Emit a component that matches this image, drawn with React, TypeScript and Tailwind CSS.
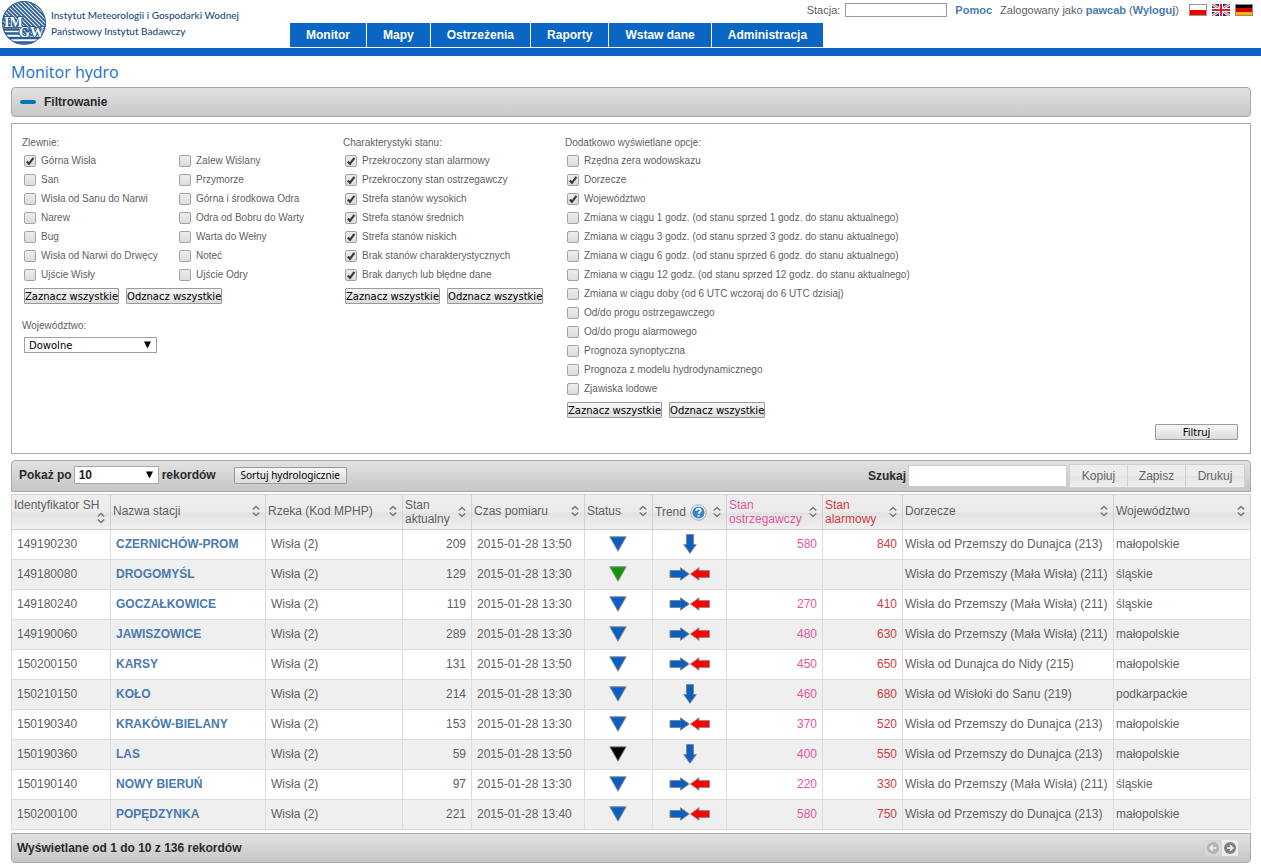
import React from "react";

const menu = ["Monitor", "Mapy", "Ostrzeżenia", "Raporty", "Wstaw dane", "Administracja"];

type Option = { label: string; checked?: boolean };

const basinsLeft: Option[] = [
  { label: "Górna Wisła", checked: true },
  { label: "San" },
  { label: "Wisła od Sanu do Narwi" },
  { label: "Narew" },
  { label: "Bug" },
  { label: "Wisła od Narwi do Drwęcy" },
  { label: "Ujście Wisły" },
];

const basinsRight: Option[] = [
  { label: "Zalew Wiślany" },
  { label: "Przymorze" },
  { label: "Górna i środkowa Odra" },
  { label: "Odra od Bobru do Warty" },
  { label: "Warta do Wełny" },
  { label: "Noteć" },
  { label: "Ujście Odry" },
];

const levels: Option[] = [
  { label: "Przekroczony stan alarmowy", checked: true },
  { label: "Przekroczony stan ostrzegawczy", checked: true },
  { label: "Strefa stanów wysokich", checked: true },
  { label: "Strefa stanów średnich", checked: true },
  { label: "Strefa stanów niskich", checked: true },
  { label: "Brak stanów charakterystycznych", checked: true },
  { label: "Brak danych lub błędne dane", checked: true },
];

const extras: Option[] = [
  { label: "Rzędna zera wodowskazu" },
  { label: "Dorzecze", checked: true },
  { label: "Województwo", checked: true },
  { label: "Zmiana w ciągu 1 godz. (od stanu sprzed 1 godz. do stanu aktualnego)" },
  { label: "Zmiana w ciągu 3 godz. (od stanu sprzed 3 godz. do stanu aktualnego)" },
  { label: "Zmiana w ciągu 6 godz. (od stanu sprzed 6 godz. do stanu aktualnego)" },
  { label: "Zmiana w ciągu 12 godz. (od stanu sprzed 12 godz. do stanu aktualnego)" },
  { label: "Zmiana w ciągu doby (od 6 UTC wczoraj do 6 UTC dzisiaj)" },
  { label: "Od/do progu ostrzegawczego" },
  { label: "Od/do progu alarmowego" },
  { label: "Prognoza synoptyczna" },
  { label: "Prognoza z modelu hydrodynamicznego" },
  { label: "Zjawiska lodowe" },
];

type Station = {
  id: string;
  name: string;
  level: string;
  time: string;
  status: string;
  trend: "down" | "steady";
  warning: string;
  alarm: string;
  basin: string;
  region: string;
};

const BLUE = "#0a5fc0";
const GREEN = "#0f950f";
const BLACK = "#000000";

const stations: Station[] = [
  { id: "149190230", name: "CZERNICHÓW-PROM", level: "209", time: "2015-01-28 13:50", status: BLUE, trend: "down", warning: "580", alarm: "840", basin: "Wisła od Przemszy do Dunajca (213)", region: "małopolskie" },
  { id: "149180080", name: "DROGOMYŚL", level: "129", time: "2015-01-28 13:30", status: GREEN, trend: "steady", warning: "", alarm: "", basin: "Wisła do Przemszy (Mała Wisła) (211)", region: "śląskie" },
  { id: "149180240", name: "GOCZAŁKOWICE", level: "119", time: "2015-01-28 13:30", status: BLUE, trend: "steady", warning: "270", alarm: "410", basin: "Wisła do Przemszy (Mała Wisła) (211)", region: "śląskie" },
  { id: "149190060", name: "JAWISZOWICE", level: "289", time: "2015-01-28 13:30", status: BLUE, trend: "steady", warning: "480", alarm: "630", basin: "Wisła do Przemszy (Mała Wisła) (211)", region: "małopolskie" },
  { id: "150200150", name: "KARSY", level: "131", time: "2015-01-28 13:50", status: BLUE, trend: "steady", warning: "450", alarm: "650", basin: "Wisła od Dunajca do Nidy (215)", region: "małopolskie" },
  { id: "150210150", name: "KOŁO", level: "214", time: "2015-01-28 13:30", status: BLUE, trend: "down", warning: "460", alarm: "680", basin: "Wisła od Wisłoki do Sanu (219)", region: "podkarpackie" },
  { id: "150190340", name: "KRAKÓW-BIELANY", level: "153", time: "2015-01-28 13:30", status: BLUE, trend: "steady", warning: "370", alarm: "520", basin: "Wisła od Przemszy do Dunajca (213)", region: "małopolskie" },
  { id: "150190360", name: "LAS", level: "59", time: "2015-01-28 13:50", status: BLACK, trend: "down", warning: "400", alarm: "550", basin: "Wisła od Przemszy do Dunajca (213)", region: "małopolskie" },
  { id: "150190140", name: "NOWY BIERUŃ", level: "97", time: "2015-01-28 13:30", status: BLUE, trend: "steady", warning: "220", alarm: "330", basin: "Wisła do Przemszy (Mała Wisła) (211)", region: "śląskie" },
  { id: "150200100", name: "POPĘDZYNKA", level: "221", time: "2015-01-28 13:40", status: BLUE, trend: "steady", warning: "580", alarm: "750", basin: "Wisła od Przemszy do Dunajca (213)", region: "małopolskie" },
];

const Logo = () => (
  <svg width="46" height="46" viewBox="0 0 46 46" aria-hidden="true">
    <defs>
      <clipPath id="disc">
        <circle cx="24" cy="23" r="22" />
      </clipPath>
    </defs>
    <g clipPath="url(#disc)">
      <rect width="48" height="46" fill="#f2f6fa" />
      <g stroke="#2b5c95" strokeWidth="1.8">
        {[-36, -32, -28, -24, -20, -16, -12, -8, -4, 0, 4, 8, 12, 16, 20, 24, 28, 32].map((x) => (
          <path key={x} d={`M${x} -4 L${x + 42} 38`} />
        ))}
      </g>
      <path d="M0 27H20V36H48V46H0Z" fill="#fff" />
      <path d="M0 29.5H19M0 33.5H20M0 38H48M0 42.5H48" stroke="#2b5c95" strokeWidth="2.4" />
    </g>
    <circle cx="24" cy="23" r="21.4" fill="none" stroke="#2b5c95" strokeWidth="1" />
    <g
      fontFamily="'Liberation Serif', serif"
      fontWeight="bold"
      fill="#fff"
      stroke="#2b5c95"
      strokeWidth="2"
      paintOrder="stroke"
    >
      <text x="4" y="27" fontSize="14">IM</text>
      <text x="19" y="37" fontSize="14">GW</text>
    </g>
  </svg>
);

const FlagPl = () => (
  <svg width="18" height="12" viewBox="0 0 18 12" aria-hidden="true">
    <rect width="18" height="12" fill="#999" />
    <rect x="1" y="1" width="16" height="5" fill="#fff" />
    <rect x="1" y="6" width="16" height="5" fill="#f00000" />
  </svg>
);

const FlagUk = () => (
  <svg width="18" height="12" viewBox="0 0 18 12" aria-hidden="true">
    <rect width="18" height="12" fill="#1f3070" />
    <path d="M0 0L18 12M18 0L0 12" stroke="#fff" strokeWidth="2.8" />
    <path d="M0 0L18 12M18 0L0 12" stroke="#d03a3a" strokeWidth="1" />
    <path d="M9 0V12M0 6H18" stroke="#fff" strokeWidth="4" />
    <path d="M9 0V12M0 6H18" stroke="#d8232f" strokeWidth="2" />
  </svg>
);

const FlagDe = () => (
  <svg width="18" height="12" viewBox="0 0 18 12" aria-hidden="true">
    <rect width="18" height="12" fill="#8a8a8a" />
    <rect x="1" y="1" width="16" height="3" fill="#000" />
    <rect x="1" y="4" width="16" height="4" fill="#dd0000" />
    <rect x="1" y="8" width="16" height="3" fill="#ffb400" />
  </svg>
);

const SortIcon = () => (
  <svg width="8" height="12" viewBox="0 0 8 12" className="ml-auto shrink-0" aria-hidden="true">
    <path
      d="M0.8 4.6L4 1.4L7.2 4.6M0.8 7.4L4 10.6L7.2 7.4"
      fill="none"
      stroke="#777"
      strokeWidth="1.4"
    />
  </svg>
);

const HelpIcon = () => (
  <svg width="17" height="17" viewBox="0 0 17 17" className="shrink-0" aria-hidden="true">
    <circle cx="8.5" cy="8.5" r="7.7" fill="#f4f6f9" stroke="#a3a9b0" />
    <circle cx="8.5" cy="8.5" r="6.1" fill="#3585d0" />
    <path
      d="M6.2 6.8C6.3 5.2 7.3 4.6 8.5 4.6C9.9 4.6 10.8 5.4 10.8 6.5C10.8 8 8.6 8.1 8.6 9.9"
      fill="none"
      stroke="#fff"
      strokeWidth="1.7"
    />
    <rect x="7.7" y="11" width="1.8" height="1.7" fill="#fff" />
  </svg>
);

const StatusIcon = ({ color }: { color: string }) => (
  <svg width="18" height="16" viewBox="0 0 18 16" className="mx-auto" aria-hidden="true">
    <path d="M0.8 0.8H17.2L9 15.2Z" fill={color} stroke="#8c8c8c" strokeWidth="1" />
  </svg>
);

const TrendIcon = ({ trend }: { trend: "down" | "steady" }) =>
  trend === "down" ? (
    <svg width="14" height="20" viewBox="0 0 14 20" className="mx-auto" aria-hidden="true">
      <path d="M3.5 0.5H10.5V10.5H13.3L7 19.3L0.7 10.5H3.5Z" fill={BLUE} stroke="#7f8790" />
    </svg>
  ) : (
    <svg width="41" height="14" viewBox="0 0 41 14" className="mx-auto" aria-hidden="true">
      <path d="M1 3.5H11.5V0.8L20.2 7L11.5 13.2V10.5H1Z" fill={BLUE} stroke="#7f8790" />
      <path d="M40.5 3.5H30V0.8L21.3 7L30 13.2V10.5H40.5Z" fill="#ff0000" stroke="#9a8a8a" />
    </svg>
  );

const PagerArrow = ({ back, color }: { back?: boolean; color: string }) => (
  <svg width="12" height="12" viewBox="0 0 12 12" aria-hidden="true">
    <circle cx="6" cy="6" r="6" fill={color} />
    <path
      d={back ? "M9 6H3.4M6 3.2L3.2 6L6 8.8" : "M3 6H8.6M6 3.2L8.8 6L6 8.8"}
      fill="none"
      stroke="#f2f2f2"
      strokeWidth="1.6"
    />
  </svg>
);

const Checkbox = ({ label, checked }: Option) => (
  <label className="flex h-[19px] items-center gap-[5px] whitespace-nowrap">
    <span className="grid">
      <input
        type="checkbox"
        defaultChecked={checked}
        className="peer col-start-1 row-start-1 size-3 appearance-none rounded-[2px] border border-[#a3a3a3] bg-linear-to-b from-[#ededed] to-[#dcdcdc]"
      />
      <svg
        viewBox="0 0 12 12"
        className="pointer-events-none invisible col-start-1 row-start-1 size-3 peer-checked:visible"
        aria-hidden="true"
      >
        <path d="M2.8 6.4L5 8.8L9.4 2.9" fill="none" stroke="#3a3a3a" strokeWidth="2.2" />
      </svg>
    </span>
    {label}
  </label>
);

const SmallButton = ({ children, className = "" }: { children: React.ReactNode; className?: string }) => (
  <button
    type="button"
    className={`h-4 rounded-[1px] border border-[#9a9a9a] bg-linear-to-b from-[#f6f6f6] to-[#dcdcdc] pt-[2px] font-['DejaVu_Sans',sans-serif] text-[10px] leading-3 whitespace-nowrap text-black ${className}`}
  >
    {children}
  </button>
);

const SelectAll = () => (
  <div className="mt-1 flex gap-[7px]">
    <SmallButton>Zaznacz wszystkie</SmallButton>
    <SmallButton>Odznacz wszystkie</SmallButton>
  </div>
);

const Triangle = () => (
  <svg
    width="7"
    height="8"
    viewBox="0 0 7 8"
    className="pointer-events-none col-start-1 row-start-1 mr-[6px] self-center justify-self-end"
    aria-hidden="true"
  >
    <path d="M0 0.5H7L3.5 7.5Z" fill="#000" />
  </svg>
);

const Th = ({ children, className = "pb-[2px]" }: { children: React.ReactNode; className?: string }) => (
  <th className="h-[35px] border border-[#d2d2d2] bg-[linear-gradient(#ededed_0%,#ebebeb_49%,#e1e1e1_51%,#f1f1f1_100%)] p-0 pr-[5px] pl-[2px] text-left font-normal">
    <div className={`flex items-center leading-[14px] ${className}`}>{children}</div>
  </th>
);

export default function App() {
  return (
    <div className="min-h-screen bg-white font-['Liberation_Sans',Arial,sans-serif] text-xs text-[#5f5f5f]">
      <header className="flex h-14 border-b-8 border-[#0a66c2]">
        <div className="flex w-[290px] shrink-0 items-start">
          <Logo />
          <p className="mt-[7px] ml-[5px] font-[Lato,sans-serif] text-[10px] leading-4 font-medium whitespace-nowrap text-[#1f4a7d]">
            Instytut Meteorologii i Gospodarki Wodnej
            <br />
            Państwowy Instytut Badawczy
          </p>
        </div>
        <div className="flex min-w-0 grow flex-col justify-between pb-px">
          <div className="flex h-5 items-center justify-end pr-2 text-[11px] whitespace-nowrap">
            <label htmlFor="station">Stacja:</label>
            <input id="station" type="text" className="ml-[5px] h-[14px] w-[102px] border border-[#999] bg-white px-1" />
            <a href="#" className="ml-2 font-bold text-[#4a7ab0]">Pomoc</a>
            <span className="ml-2">
              Zalogowany jako <a href="#" className="font-bold text-[#4a7ab0]">pawcab</a> (
              <a href="#" className="font-bold text-[#4a7ab0]">Wyloguj</a>)
            </span>
            <div className="ml-[10px] flex gap-[5px]">
              <a href="#" aria-label="Polski"><FlagPl /></a>
              <a href="#" aria-label="English"><FlagUk /></a>
              <a href="#" aria-label="Deutsch"><FlagDe /></a>
            </div>
          </div>
          <nav className="flex gap-px">
            {menu.map((item) => (
              <a key={item} href="#" className="bg-[#0a66c2] px-4 text-xs leading-6 font-bold whitespace-nowrap text-white">
                {item}
              </a>
            ))}
          </nav>
        </div>
      </header>

      <main className="pr-[10px] pl-[11px]">
        <h1 className="pt-[3px] pb-px font-['Open_Sans',sans-serif] text-base leading-[27px] text-[#1a70c8]">Monitor hydro</h1>

        <button
          type="button"
          className="flex h-[30px] w-full items-center gap-2 rounded border border-[#a8a8a8] bg-linear-to-b from-[#e2e2e2] to-[#c8c8c8] px-2 font-bold text-[#2a2a2a]"
        >
          <span className="h-1 w-4 rounded-full bg-[#0877b3]" />
          Filtrowanie
        </button>

        <form className="mt-[6px] border border-[#aaa] px-[10px] pt-[10px] pb-[13px] text-[10px]">
          <div className="flex">
            <div className="w-[321px] shrink-0">
              <p className="leading-[17px]">Zlewnie:</p>
              <div className="pl-[2px]">
                <div className="flex">
                  <div className="w-[155px]">
                    {basinsLeft.map((option) => (
                      <Checkbox key={option.label} {...option} />
                    ))}
                  </div>
                  <div>
                    {basinsRight.map((option) => (
                      <Checkbox key={option.label} {...option} />
                    ))}
                  </div>
                </div>
                <SelectAll />
              </div>
              <label htmlFor="region" className="mt-[13px] block leading-[17px]">Województwo:</label>
              <div className="mt-[3px] ml-[2px] grid w-[133px]">
                <select
                  id="region"
                  className="col-start-1 row-start-1 h-4 appearance-none border border-[#a0a0a0] bg-white pt-px pl-1 font-['DejaVu_Sans',sans-serif] text-[10px] leading-[13px] text-black"
                >
                  <option>Dowolne</option>
                </select>
                <Triangle />
              </div>
            </div>

            <div className="w-[222px] shrink-0">
              <p className="leading-[17px]">Charakterystyki stanu:</p>
              <div className="pl-[2px]">
                {levels.map((option) => (
                  <Checkbox key={option.label} {...option} />
                ))}
                <SelectAll />
              </div>
            </div>

            <div>
              <p className="leading-[17px]">Dodatkowo wyświetlane opcje:</p>
              <div className="pl-[2px]">
                {extras.map((option) => (
                  <Checkbox key={option.label} {...option} />
                ))}
                <SelectAll />
              </div>
            </div>
          </div>
          <div className="mt-[6px] flex justify-end pr-[2px]">
            <SmallButton className="w-[83px]">Filtruj</SmallButton>
          </div>
        </form>

        <div className="mt-[6px] flex h-8 items-center rounded-t border border-[#a8a8a8] bg-linear-to-b from-[#e2e2e2] to-[#c6c6c6] pr-[5px] pl-[7px] font-bold text-[#2a2a2a]">
          <div className="flex items-center pb-[2px]">
            <label htmlFor="page-size">Pokaż po</label>
            <div className="ml-[2px] grid w-[85px]">
              <select
                id="page-size"
                className="col-start-1 row-start-1 h-[18px] appearance-none border border-[#a8a8a8] bg-white pl-1 text-xs leading-4 font-bold text-[#222]"
              >
                <option>10</option>
              </select>
              <Triangle />
            </div>
            <span className="ml-[3px]">rekordów</span>
            <button
              type="button"
              className="ml-[18px] h-[17px] w-[113px] rounded-[1px] border border-[#9a9a9a] bg-linear-to-b from-[#f6f6f6] to-[#dcdcdc] font-['Noto_Sans',sans-serif] text-[10px] leading-[15px] font-normal whitespace-nowrap text-black"
            >
              Sortuj hydrologicznie
            </button>
          </div>
          <label htmlFor="search" className="ml-auto">Szukaj</label>
          <input id="search" type="text" className="ml-[2px] h-[22px] w-[159px] border border-[#ccc] bg-white px-1 font-normal" />
          <div className="ml-[2px] flex divide-x divide-[#d0d0d0] border border-[#d0d0d0] font-normal text-[#666]">
            {["Kopiuj", "Zapisz", "Drukuj"].map((action) => (
              <button
                key={action}
                type="button"
                className="h-[22px] w-[58px] grow bg-[linear-gradient(#ededed_0%,#ebebeb_49%,#e4e4e4_51%,#eeeeee_100%)]"
              >
                {action}
              </button>
            ))}
          </div>
        </div>

        <table className="mt-[2px] w-full table-fixed border-collapse">
          <colgroup>
            <col className="w-[99px]" />
            <col className="w-[155px]" />
            <col className="w-[137px]" />
            <col className="w-[69px]" />
            <col className="w-[113px]" />
            <col className="w-[68px]" />
            <col className="w-[74px]" />
            <col className="w-[96px]" />
            <col className="w-[80px]" />
            <col className="w-[211px]" />
            <col className="w-[137px]" />
          </colgroup>
          <thead>
            <tr>
              <Th className="flex-wrap pb-[2px]">Identyfikator SH <SortIcon /></Th>
              <Th>Nazwa stacji <SortIcon /></Th>
              <Th>Rzeka (Kod MPHP) <SortIcon /></Th>
              <Th className=""><span>Stan<br />aktualny</span> <SortIcon /></Th>
              <Th>Czas pomiaru <SortIcon /></Th>
              <Th>Status <SortIcon /></Th>
              <Th className="gap-1">Trend <HelpIcon /> <SortIcon /></Th>
              <Th className="text-[#e8559f]"><span>Stan<br />ostrzegawczy</span> <SortIcon /></Th>
              <Th className="text-[#d23b3f]"><span>Stan<br />alarmowy</span> <SortIcon /></Th>
              <Th>Dorzecze <SortIcon /></Th>
              <Th>Województwo <SortIcon /></Th>
            </tr>
          </thead>
          <tbody>
            {stations.map((row) => (
              <tr key={row.id} className="h-[30px] whitespace-nowrap even:bg-[#efefef] *:border *:border-[#dcdcdc] *:pb-[2px]">
                <td className="pl-[5px]">{row.id}</td>
                <td className="pl-[5px]">
                  <a href="#" className="font-bold text-[#4a7ab0]">{row.name}</a>
                </td>
                <td className="pl-[5px]">Wisła (2)</td>
                <td className="pr-[5px] text-right">{row.level}</td>
                <td className="pl-[5px]">{row.time}</td>
                <td className="pr-px"><StatusIcon color={row.status} /></td>
                <td><TrendIcon trend={row.trend} /></td>
                <td className="pr-[5px] text-right text-[#e8559f]">{row.warning}</td>
                <td className="pr-[5px] text-right text-[#d23b3f]">{row.alarm}</td>
                <td className="pl-[2px]">{row.basin}</td>
                <td className="pl-[2px]">{row.region}</td>
              </tr>
            ))}
          </tbody>
        </table>

        <div className="mt-[3px] flex h-[30px] items-center rounded-b border border-[#a8a8a8] bg-linear-to-b from-[#e2e2e2] to-[#c6c6c6] pr-3 pl-[5px] font-bold text-[#2a2a2a]">
          Wyświetlane od 1 do 10 z 136 rekordów
          <div className="ml-auto flex gap-px">
            <button type="button" disabled aria-label="Poprzednia strona" className="grid size-4 place-items-center bg-[#d6d6d6]">
              <PagerArrow back color="#b4b4b4" />
            </button>
            <button type="button" aria-label="Następna strona" className="grid size-4 place-items-center bg-[#ececec]">
              <PagerArrow color="#808080" />
            </button>
          </div>
        </div>
      </main>
    </div>
  );
}
